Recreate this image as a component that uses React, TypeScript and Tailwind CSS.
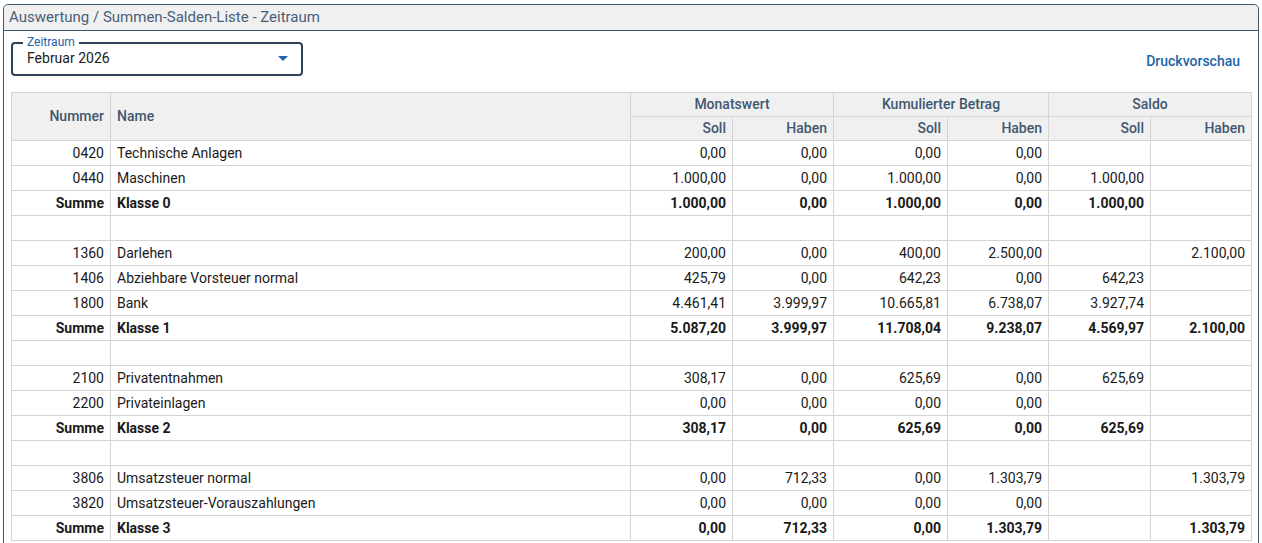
import React from "react";

type Row = { n: string; name: string; v: string[]; bold?: boolean; empty?: boolean };

const rows: Row[] = [
  { n: "0420", name: "Technische Anlagen", v: ["0,00", "0,00", "0,00", "0,00", "", ""] },
  { n: "0440", name: "Maschinen", v: ["1.000,00", "0,00", "1.000,00", "0,00", "1.000,00", ""] },
  { n: "Summe", name: "Klasse 0", v: ["1.000,00", "0,00", "1.000,00", "0,00", "1.000,00", ""], bold: true },
  { n: "", name: "", v: ["", "", "", "", "", ""], empty: true },
  { n: "1360", name: "Darlehen", v: ["200,00", "0,00", "400,00", "2.500,00", "", "2.100,00"] },
  { n: "1406", name: "Abziehbare Vorsteuer normal", v: ["425,79", "0,00", "642,23", "0,00", "642,23", ""] },
  { n: "1800", name: "Bank", v: ["4.461,41", "3.999,97", "10.665,81", "6.738,07", "3.927,74", ""] },
  { n: "Summe", name: "Klasse 1", v: ["5.087,20", "3.999,97", "11.708,04", "9.238,07", "4.569,97", "2.100,00"], bold: true },
  { n: "", name: "", v: ["", "", "", "", "", ""], empty: true },
  { n: "2100", name: "Privatentnahmen", v: ["308,17", "0,00", "625,69", "0,00", "625,69", ""] },
  { n: "2200", name: "Privateinlagen", v: ["0,00", "0,00", "0,00", "0,00", "", ""] },
  { n: "Summe", name: "Klasse 2", v: ["308,17", "0,00", "625,69", "0,00", "625,69", ""], bold: true },
  { n: "", name: "", v: ["", "", "", "", "", ""], empty: true },
  { n: "3806", name: "Umsatzsteuer normal", v: ["0,00", "712,33", "0,00", "1.303,79", "", "1.303,79"] },
  { n: "3820", name: "Umsatzsteuer-Vorauszahlungen", v: ["0,00", "0,00", "0,00", "0,00", "", ""] },
  { n: "Summe", name: "Klasse 3", v: ["0,00", "712,33", "0,00", "1.303,79", "", "1.303,79"], bold: true },
];

const widths = [99, 520, 102, 101, 114, 101, 102, 101];
const th = "border border-[#d4d4d4] bg-[#f0f0f0] text-[#3f5870] font-medium px-[6px] h-[24px]";
const td = "border border-[#d4d4d4] px-[6px] h-[25px] text-[#1a1a1a]";

export default function App() {
  return (
    <div className="w-[1262px] h-[543px] overflow-hidden bg-white pt-[4px] px-[3px]" style={{ fontFamily: "Roboto, 'Liberation Sans', sans-serif" }}>
      <div className="border border-[#3d5770] rounded-t-[5px] h-[600px]">
        <div className="bg-[#f0f0f0] h-[26px] border-b border-[#3d5770] rounded-t-[5px] px-[5px] flex items-center text-[15px] text-[#4a6078]">
          Auswertung / Summen-Salden-Liste - Zeitraum
        </div>
        <div className="px-[7px]">
          <div className="flex items-start justify-between mt-[11px] h-[50px]">
            <div className="relative w-[292px] h-[34px] border-2 border-[#2e4257] rounded-[4px] flex items-center justify-between pl-[14px] pr-[13px]">
              <span className="absolute -top-[9px] left-[10px] bg-white px-[4px] text-[12px] leading-[14px] text-[#1d64a8]">Zeitraum</span>
              <span className="text-[14px] text-[#1a1a1a] mt-[-2px]">Februar 2026</span>
              <svg width="10" height="6" viewBox="0 0 10 6"><path d="M0 0 L10 0 L5 5 Z" fill="#1d64a8" /></svg>
            </div>
            <a className="text-[14px] font-medium text-[#1d64a8] mt-[9px] mr-[11px]">Druckvorschau</a>
          </div>
          <table className="border-collapse text-[14px] table-fixed" style={{ width: 1241 }}>
            <colgroup>
              {widths.map((w, i) => (
                <col key={i} style={{ width: w }} />
              ))}
            </colgroup>
            <thead>
              <tr>
                <th rowSpan={2} className={th + " text-right"}>Nummer</th>
                <th rowSpan={2} className={th + " text-left"}>Name</th>
                <th colSpan={2} className={th + " text-center"}>Monatswert</th>
                <th colSpan={2} className={th + " text-center"}>Kumulierter Betrag</th>
                <th colSpan={2} className={th + " text-center"}>Saldo</th>
              </tr>
              <tr>
                {["Soll", "Haben", "Soll", "Haben", "Soll", "Haben"].map((h, i) => (
                  <th key={i} className={th + " text-right"}>{h}</th>
                ))}
              </tr>
            </thead>
            <tbody>
              {rows.map((r, i) => (
                <tr key={i} className={r.bold ? "font-bold" : ""}>
                  <td className={td + " text-right"}>{r.n}</td>
                  <td className={td + " text-left"}>{r.name}</td>
                  {r.v.map((v, j) => (
                    <td key={j} className={td + " text-right"}>{v}</td>
                  ))}
                </tr>
              ))}
            </tbody>
          </table>
        </div>
      </div>
    </div>
  );
}
